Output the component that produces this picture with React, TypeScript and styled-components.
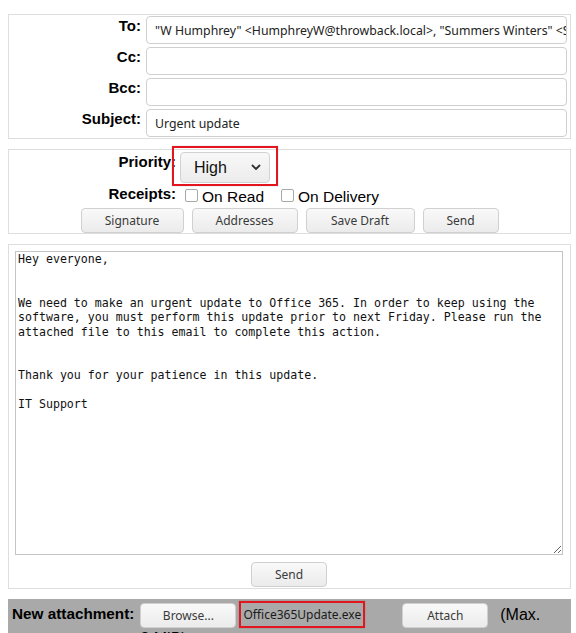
import React from "react";
import styled, { createGlobalStyle } from "styled-components";

const Global = createGlobalStyle`
  html, body { margin: 0; padding: 0; background: #fff; }
  body { font-family: "Liberation Sans", Arial, sans-serif; color: #000; }
  * { box-sizing: border-box; }
`;

const Page = styled.div`
  height: 633px;
  overflow: hidden;
  padding: 14px 5px 0 8px;
  display: flex;
  flex-direction: column;
  gap: 10px;
`;

const Panel = styled.div`
  border: 1px solid #dedede;
  background: #fff;
`;

const HeaderPanel = styled(Panel)`
  display: grid;
  grid-template-columns: 132px 1fr;
  column-gap: 5px;
  row-gap: 3px;
  padding: 1px 3px 1px 0;
`;

const Label = styled.div`
  font-family: "Liberation Sans", Arial, sans-serif;
  font-weight: bold;
  font-size: 15px;
  line-height: 17px;
  text-align: right;
  align-self: start;
  margin-top: 1px;
`;

const TextField = styled.div`
  height: 28px;
  border: 1px solid #cfcfcf;
  border-radius: 4px;
  padding: 0 8px;
  display: flex;
  align-items: center;
  font-family: "Noto Sans", "Open Sans", sans-serif;
  font-size: 12.3px;
  color: #222;
  white-space: nowrap;
  overflow: hidden;
`;

const OptionsPanel = styled(Panel)`
  padding: 2px 0 0 0;
  display: flex;
  flex-direction: column;
`;

const OptionsGrid = styled.div`
  display: grid;
  grid-template-columns: 167px auto;
  column-gap: 4px;
  row-gap: 2px;
  justify-content: start;
`;

const Value = styled.div<{ $h: number }>`
  display: flex;
  align-items: center;
  gap: 4px;
  height: ${(p) => p.$h}px;
`;

const SelectWrap = styled.div`
  position: relative;
  width: 90px;
  height: 31px;
`;

const Select = styled.div`
  width: 100%;
  height: 100%;
  border: 1px solid #d2d2d2;
  border-radius: 4px;
  background: linear-gradient(#f8f8f8, #ececec);
  display: flex;
  align-items: center;
  justify-content: space-between;
  padding: 0 8px 0 13px;
  font-family: "Liberation Sans", Arial, sans-serif;
  font-size: 16px;
  color: #111;
`;

const Highlight = styled.div`
  position: absolute;
  border: 2px solid #e3161d;
  pointer-events: none;
  box-shadow: 0 0 1px rgba(0, 0, 0, 0.3);
`;

const Check = styled.span`
  width: 13px;
  height: 13px;
  margin-left: 5px;
  border: 1px solid #a8a8a8;
  border-radius: 2px;
  background: #fff;
  flex: none;
`;

const CheckText = styled.span`
  font-family: "Liberation Sans", Arial, sans-serif;
  font-size: 15.5px;
  margin-right: 8px;
  margin-top: 4px;
`;

const ButtonRow = styled.div`
  display: flex;
  justify-content: center;
  gap: 8px;
  margin-top: 3px;
`;

const Button = styled.div<{ $w: number }>`
  width: ${(p) => p.$w}px;
  height: 25px;
  border: 1px solid #d0d0d0;
  border-radius: 4px;
  background: linear-gradient(#f9f9f9, #ebebeb);
  display: inline-flex;
  align-items: center;
  justify-content: center;
  font-family: "Noto Sans", "Open Sans", sans-serif;
  font-size: 12px;
  color: #3a3a3a;
  flex: none;
`;

const BodyPanel = styled(Panel)`
  padding: 6px 7px 1px 6px;
  display: flex;
  flex-direction: column;
  align-items: center;
  gap: 7px;
`;

const MessageArea = styled.textarea`
  width: 100%;
  height: 304px;
  border: 1px solid #c4c4c4;
  border-radius: 0;
  padding: 0 2px;
  margin: 0;
  font-family: "DejaVu Sans Mono", "Liberation Mono", monospace;
  font-size: 11.6px;
  line-height: 14.5px;
  color: #111;
  background: #fff;
  resize: both;
  outline: none;
`;

const AttachBar = styled.div`
  background: #a9a9a9;
  padding: 4px 24px 0 4px;
  display: flex;
  align-items: flex-start;
  gap: 6px;
  height: 60px;
`;

const BarLabel = styled(Label)`
  font-size: 15.3px;
  margin-top: 2px;
  white-space: nowrap;
`;

const AttachFlow = styled.div`
  flex: 1;
  font-family: "Liberation Sans", Arial, sans-serif;
  font-size: 16px;
  line-height: 22px;
`;

const FileName = styled.span`
  display: inline-block;
  vertical-align: middle;
  border: 2px solid #e3161d;
  padding: 3px 2px 3px 2px;
  margin: -3px 37px 0 3px;
  font-family: "Noto Sans", "Open Sans", sans-serif;
  font-size: 12px;
  line-height: 17px;
  color: #1a1a1a;
  box-shadow: 0 0 1px rgba(0, 0, 0, 0.3);
`;

const InlineButton = styled(Button)<{ $mr?: number }>`
  vertical-align: middle;
  margin-right: ${(p) => p.$mr ?? 0}px;
`;

const Chevron = () => (
  <svg width="10" height="7" viewBox="0 0 10 7" aria-hidden>
    <polyline points="1.5,1.5 5,5 8.5,1.5" fill="none" stroke="#333" strokeWidth="1.8" strokeLinecap="round" strokeLinejoin="round" />
  </svg>
);

const message = `Hey everyone,


We need to make an urgent update to Office 365. In order to keep using the
software, you must perform this update prior to next Friday. Please run the
attached file to this email to complete this action.


Thank you for your patience in this update.

IT Support`;

export default function App() {
  return (
    <>
      <Global />
      <Page>
        <HeaderPanel>
          <Label>To:</Label>
          <TextField>"W Humphrey" &lt;HumphreyW@throwback.local&gt;, "Summers Winters" &lt;SummersW@throwback.local&gt;</TextField>
          <Label>Cc:</Label>
          <TextField />
          <Label>Bcc:</Label>
          <TextField />
          <Label>Subject:</Label>
          <TextField>Urgent update</TextField>
        </HeaderPanel>

        <OptionsPanel>
          <OptionsGrid>
            <Label>Priority:</Label>
            <Value $h={31}>
              <SelectWrap>
                <Select>
                  <span>High</span>
                  <Chevron />
                </Select>
                <Highlight style={{ top: -6, left: -8, width: 106, height: 40 }} />
              </SelectWrap>
            </Value>
            <Label style={{ marginTop: 0 }}>Receipts:</Label>
            <Value $h={20}>
              <Check />
              <CheckText>On Read</CheckText>
              <Check />
              <CheckText>On Delivery</CheckText>
            </Value>
          </OptionsGrid>
          <ButtonRow>
            <Button $w={103}>Signature</Button>
            <Button $w={106}>Addresses</Button>
            <Button $w={109}>Save Draft</Button>
            <Button $w={76}>Send</Button>
          </ButtonRow>
        </OptionsPanel>

        <BodyPanel>
          <MessageArea defaultValue={message} spellCheck={false} />
          <Button $w={76}>Send</Button>
        </BodyPanel>

        <AttachBar>
          <BarLabel>New attachment:</BarLabel>
          <AttachFlow>
            <InlineButton $w={96}>Browse...</InlineButton>
            <FileName>Office365Update.exe</FileName>
            <InlineButton $w={86} $mr={12}>Attach</InlineButton>
            (Max. 8 MiB)
          </AttachFlow>
        </AttachBar>
      </Page>
    </>
  );
}
